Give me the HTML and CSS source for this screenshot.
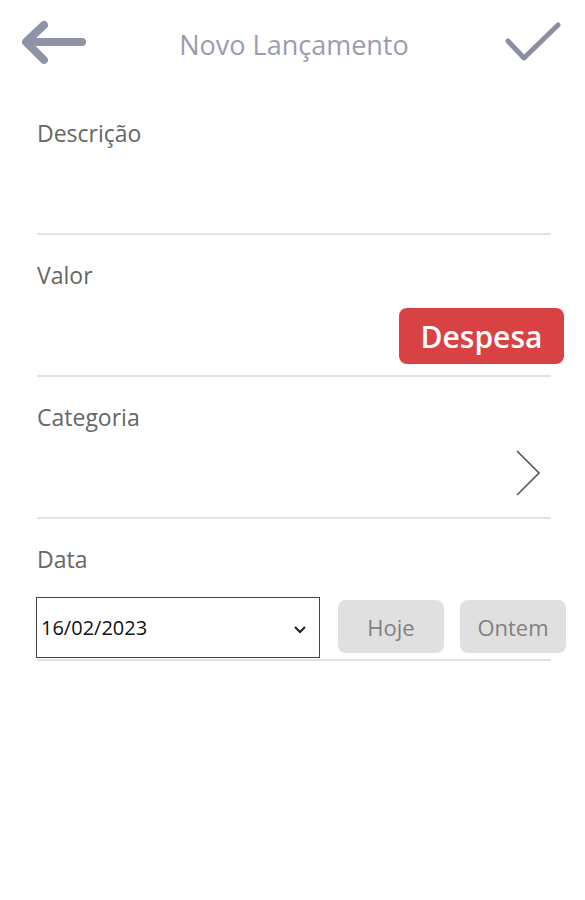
FILE: index.html
```html
<!DOCTYPE html>
<html>
<head>
<meta charset="UTF-8">
<title>Novo Lançamento</title>
<link rel="stylesheet" href="styles.css">
</head>
<body>
<div class="top">
  <svg class="back" width="70" height="50" viewBox="0 0 70 50">
    <path d="M62 22 H8 M24 5 L6 22 L24 40" fill="none" stroke="#8f93a8" stroke-width="8" stroke-linecap="round" stroke-linejoin="round"/>
  </svg>
  <h1 class="title">Novo Lançamento</h1>
  <svg class="ok" width="60" height="44" viewBox="0 0 60 44">
    <path d="M4 20 L20 37 L54 4" fill="none" stroke="#8a8ea4" stroke-width="5" stroke-linecap="round" stroke-linejoin="round"/>
  </svg>
</div>

<div class="campo">
  <div class="rotulo">Descrição</div>
  <div class="linha"></div>
</div>

<div class="campo">
  <div class="rotulo">Valor</div>
  <div class="linha">
    <button class="despesa">Despesa</button>
  </div>
</div>

<div class="campo">
  <div class="rotulo">Categoria</div>
  <div class="linha">
    <svg class="seta" width="26" height="46" viewBox="0 0 26 46">
      <path d="M2 1 L24 23 L2 45" fill="none" stroke="#555" stroke-width="1.6"/>
    </svg>
  </div>
</div>

<div class="campo ultimo">
  <div class="rotulo">Data</div>
  <div class="linha">
    <div class="data">
      <span>16/02/2023</span>
      <svg width="14" height="10" viewBox="0 0 14 10"><path d="M2 2 L7 7 L12 2" fill="none" stroke="#222" stroke-width="2"/></svg>
    </div>
    <button class="atalho">Hoje</button>
    <button class="atalho">Ontem</button>
  </div>
</div>
</body>
</html>
```

FILE: styles.css
```css
body {
margin: 0;
background: #fff;
font-family: "Open Sans", "Noto Sans", sans-serif;
}
.top {
height: 93px;
display: flex;
align-items: flex-start;
padding: 0 21px 0 20px;
}
.back {
margin-top: 20px;
}
.title {
flex: 1;
margin: 26px 6px 0 0;
text-align: center;
font-weight: normal;
font-size: 27px;
color: #9a9cae;
}
.ok {
margin-top: 21px;
}
.campo {
margin: 0 34px 0 37px;
height: 140px;
border-bottom: 2px solid #e2e2e2;
display: flex;
flex-direction: column;
}
.rotulo {
margin-top: 24px;
font-size: 23px;
color: #666;
}
.linha {
flex: 1;
display: flex;
align-items: center;
justify-content: flex-end;
}
.despesa {
margin-right: -13px;
margin-top: 6px;
width: 165px;
height: 56px;
border: none;
border-radius: 8px;
background: #d84244;
color: #fff;
font-family: "Open Sans", sans-serif;
font-weight: 600;
font-size: 30px;
}
.seta {
margin-right: 10px;
margin-bottom: 4px;
}
.ultimo .linha {
justify-content: flex-start;
align-items: flex-end;
margin-left: -1px;
}
.data {
flex-shrink: 0;
display: flex;
align-items: center;
justify-content: space-between;
padding: 0 12px 0 4px;
box-sizing: border-box;
width: 284px;
height: 61px;
border: 1px solid #444;
font-size: 20px;
color: #111;
margin-bottom: 1px;
}
.data svg {
margin-top: 4px;
}
.atalho {
flex-shrink: 0;
margin-left: 18px;
margin-bottom: 6px;
width: 106px;
height: 53px;
border: none;
border-radius: 8px;
background: #e0e0e0;
color: #808080;
font-family: "Open Sans", sans-serif;
font-weight: normal;
font-size: 22px;
}
.atalho + .atalho {
margin-left: 16px;
}
```
